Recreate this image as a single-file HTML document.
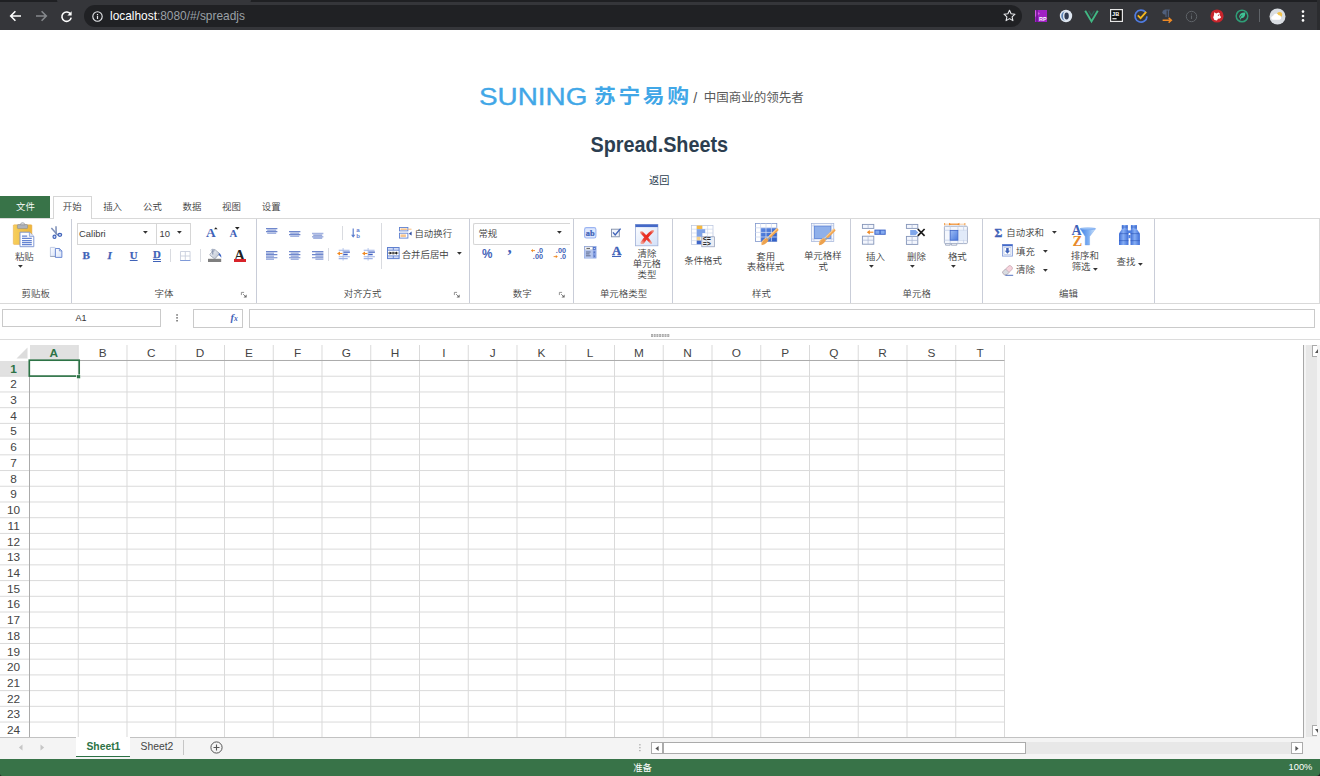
<!DOCTYPE html>
<html lang="zh">
<head>
<meta charset="utf-8">
<title>Spread.Sheets</title>
<style>
html,body{margin:0;padding:0;background:#fff;}
body{width:1320px;height:776px;position:relative;overflow:hidden;font-family:"Liberation Sans","Noto Sans CJK SC",sans-serif;color:#333;}
.a{position:absolute;}
.t{position:absolute;white-space:nowrap;font-size:9.43px;line-height:12px;color:#3c3c3c;font-weight:350;}
.c{text-align:center;}
svg{position:absolute;overflow:visible;}
#chrome{left:0;top:0;width:1320px;height:30px;background:#35363a;}
.gsep{position:absolute;top:219px;width:1px;height:84px;background:#c9cdd8;}
.sep{position:absolute;width:1px;background:#d9dbe0;}
.gl{position:absolute;top:288px;font-size:9.43px;line-height:12px;color:#444;font-weight:350;white-space:nowrap;transform:translateX(-50%);}
.box{position:absolute;border:1px solid #c8c8c8;box-sizing:border-box;background:#fff;}
.dd{position:absolute;width:0;height:0;border-left:2.5px solid transparent;border-right:2.5px solid transparent;border-top:2.9px solid #333;}
.dl{position:absolute;width:5.5px;height:5.5px;}
.rn{position:absolute;left:0;width:27.2px;text-align:center;font-size:11.8px;line-height:15.7px;color:#444;}
.ch{position:absolute;top:345px;height:15.5px;text-align:center;font-size:11.8px;line-height:16px;color:#444;width:48.75px;}
</style>
</head>
<body>
<div id="chrome" class="a">
<div class="a" style="left:0;top:0;width:1320px;height:2px;background:#1f2023"></div>
<div class="a" style="left:57px;top:0;width:194px;height:3px;background:#35363a;border-radius:0 0 3px 3px"></div>
<div class="a" style="left:84px;top:5px;width:938px;height:22px;border-radius:11px;background:#202124"></div>
<svg style="left:9px;top:10px" width="13" height="12" viewBox="0 0 13 12"><path d="M12 6H2M6.4 1.3L1.7 6l4.7 4.7" fill="none" stroke="#fff" stroke-width="1.6"/></svg>
<svg style="left:35px;top:10px" width="13" height="12" viewBox="0 0 13 12"><path d="M1 6h10M6.6 1.3L11.3 6l-4.7 4.7" fill="none" stroke="#85888c" stroke-width="1.6"/></svg>
<svg style="left:60px;top:9.5px" width="13" height="13" viewBox="0 0 13 13"><path d="M10.6 4.2A4.7 4.7 0 1 0 11.2 7.6" fill="none" stroke="#fff" stroke-width="1.6"/><path d="M11.6 1.2v4.2H7.4z" fill="#fff"/></svg>
<svg style="left:92px;top:10.5px" width="11" height="11" viewBox="0 0 11 11"><circle cx="5.5" cy="5.5" r="4.7" fill="none" stroke="#e8eaed" stroke-width="1.1"/><path d="M5.5 4.8v3.2M5.5 2.9v1.1" stroke="#e8eaed" stroke-width="1.2"/></svg>
<div class="a" id="url" style="left:110px;top:9.1px;font-size:11.9px;line-height:15px;color:#9aa0a6;white-space:nowrap"><span style="color:#fff">localhost</span>:8080/#/spreadjs</div>
<svg style="left:1003px;top:9px" width="13" height="13" viewBox="0 0 13 13"><path d="M6.5 1.2l1.6 3.6 3.9.4-2.9 2.6.8 3.8-3.4-2-3.4 2 .8-3.8L1 5.2l3.9-.4z" fill="none" stroke="#e8eaed" stroke-width="1.1" stroke-linejoin="round"/></svg>
<svg style="left:1034px;top:9px" width="14" height="14" viewBox="0 0 14 14"><rect x="1" y="1" width="12" height="12" fill="#a021c4"/><path d="M1 1l5 3.5L1 8z" fill="#d65be8"/><rect x="2.2" y="1" width="1.6" height="12" fill="#6d1391"/><text x="5" y="11.6" font-size="5.4" font-weight="bold" fill="#fff" font-family="Liberation Sans,sans-serif">RP</text></svg>
<svg style="left:1059px;top:9px" width="14" height="14" viewBox="0 0 14 14"><circle cx="7" cy="7" r="6.2" fill="#dfe7f1"/><path d="M7 2.2a4.8 4.8 0 1 0 0 9.6a3 4.8 0 1 1 0-9.6z" fill="#5c84b8"/><ellipse cx="7.6" cy="7" rx="2.2" ry="3.4" fill="#2f3b52"/></svg>
<svg style="left:1084px;top:10px" width="15" height="13" viewBox="0 0 15 13"><path d="M1.200 .8L7.500 11.400 13.800 .8" fill="none" stroke="#41b883" stroke-width="1.900"/><path d="M4.600 .8L7.500 5.600 10.400 .8" fill="none" stroke="#2f5f55" stroke-width="1.200"/></svg>
<svg style="left:1110px;top:9px" width="13" height="13" viewBox="0 0 13 13"><rect x=".6" y=".6" width="11.8" height="11.8" fill="#111" stroke="#e6e6e6" stroke-width="1.2"/><text x="2.1" y="7.2" font-size="5.6" font-weight="bold" fill="#fff" font-family="Liberation Sans,sans-serif">JB</text><rect x="2.4" y="9.2" width="4.2" height="1.1" fill="#fff"/></svg>
<svg style="left:1134px;top:9px" width="14" height="14" viewBox="0 0 14 14"><path d="M11.6 3.2A6 6 0 1 0 13 7.4" fill="none" stroke="#4f7be0" stroke-width="1.7"/><path d="M3.8 6.4l2.8 2.8 5.6-6.4" fill="none" stroke="#f5b71c" stroke-width="1.8"/></svg>
<svg style="left:1160px;top:9px" width="14" height="14" viewBox="0 0 14 14"><path d="M4.6 1h5.2M6 1v7M8.4 1v7" stroke="#4f5f7c" stroke-width="1.2" fill="none"/><path d="M4.6 1a2.2 2.2 0 0 0 0 4.4H6V1z" fill="#4f5f7c"/><path d="M2.6 11.2h8.6M8.6 8.8l2.8 2.4-2.8 2.4" fill="none" stroke="#f08a24" stroke-width="1.4"/></svg>
<svg style="left:1185px;top:10px" width="13" height="13" viewBox="0 0 13 13"><circle cx="6.5" cy="6.5" r="5.2" fill="none" stroke="#5f6368" stroke-width="1"/><path d="M6.5 5.6v3.4M6.5 3.6v1" stroke="#5f6368" stroke-width="1.1"/></svg>
<svg style="left:1210px;top:9px" width="14" height="14" viewBox="0 0 14 14"><circle cx="7" cy="7" r="6.6" fill="#c8252c"/><path d="M4.2 3.2l2 1.2 2.2-1 1.4.8-.3 1.6 1.6 2.4-1.2 1.4-1.9.2-1 1.6-2.6-.4-1.2-2.6.8-2.4z" fill="#fff"/><circle cx="8.4" cy="6.2" r=".6" fill="#c8252c"/></svg>
<svg style="left:1235px;top:9px" width="14" height="14" viewBox="0 0 14 14"><circle cx="7" cy="7" r="5.8" fill="none" stroke="#2f9e77" stroke-width="1.5"/><path d="M10.2 3.6C6.800 3.400 4.400 5 4.200 7.800c0 .8.200 1.600.200 1.600C5 7.600 6 6.400 7.800 5.800 6.200 7 5.200 8.400 4.800 10.400l.9.200.5-1.400C9 9.400 10.600 7 10.200 3.600z" fill="#3fc496"/></svg>
<div class="a" style="left:1259px;top:9px;width:1px;height:13px;background:#5f6368"></div>
<svg style="left:1269px;top:8px" width="17" height="17" viewBox="0 0 17 17"><circle cx="8.500" cy="8.500" r="8" fill="#d9dde2"/><circle cx="10.6" cy="6.6" r="2.6" fill="#f3c34a"/><path d="M3.6 11.800a2 2 0 0 1 .4-3.900 3 3 0 0 1 5.600-.6 2.300 2.300 0 0 1 .9 4.500z" fill="#fff"/></svg>
<svg style="left:1301px;top:10px" width="4" height="12" viewBox="0 0 4 12"><circle cx="2" cy="1.600" r="1.300" fill="#fff"/><circle cx="2" cy="6" r="1.300" fill="#fff"/><circle cx="2" cy="10.400" r="1.300" fill="#fff"/></svg>
<div class="a" style="left:1317px;top:0;width:3px;height:30px;background:#2b2c2f"></div>
</div>
<div class="a" id="suning" style="left:479.2px;top:81.6px;font-size:24.1px;line-height:30px;color:#41a7e7;-webkit-text-stroke:.35px #41a7e7;white-space:nowrap;transform-origin:0 50%;transform:scaleX(1.157)">SUNING</div>
<div class="a" id="snzh" style="left:593.9px;top:80.9px;font-size:19.4px;line-height:30px;letter-spacing:2.3px;font-weight:700;color:#41a7e7;white-space:nowrap;transform-origin:0 50%;transform:scaleX(1.125)">苏宁易购</div>
<div class="a" id="slash" style="left:693.2px;top:88px;font-size:14.2px;line-height:20px;color:#555;white-space:nowrap">/</div>
<div class="a" id="slogan" style="left:703.8px;top:87.8px;font-size:12.5px;line-height:20px;color:#5a5a5a;white-space:nowrap">中国商业的领先者</div>
<div class="a" id="title" style="left:0;top:129.6px;width:1318.6px;text-align:center;font-weight:bold;font-size:21.9px;line-height:30px;color:#2c3e50;white-space:nowrap;transform:scaleX(0.905)">Spread.Sheets</div>
<div class="a" id="back" style="left:0;top:174.3px;width:1318.4px;text-align:center;font-size:10.2px;line-height:14px;color:#2c3e50">返回</div>
<div class="a" style="left:0;top:196px;width:50px;height:22px;background:#387348"></div>
<div class="t " style="left:25.50px;top:200.50px;transform:translateX(-50%);color:#fff;">文件</div>
<div class="a" style="left:-1px;top:218px;width:1321px;height:85.5px;border:1px solid #d9d9d9;box-sizing:border-box;background:#fff"></div>
<div class="a" style="left:53px;top:196px;width:38.5px;height:23px;border:1px solid #d6d6d6;border-bottom:none;box-sizing:border-box;background:#fff"></div>
<div class="t " style="left:72.20px;top:200.70px;transform:translateX(-50%);">开始</div>
<div class="t " style="left:112.60px;top:200.70px;transform:translateX(-50%);">插入</div>
<div class="t " style="left:152.40px;top:200.70px;transform:translateX(-50%);">公式</div>
<div class="t " style="left:191.90px;top:200.70px;transform:translateX(-50%);">数据</div>
<div class="t " style="left:231.40px;top:200.70px;transform:translateX(-50%);">视图</div>
<div class="t " style="left:271.20px;top:200.70px;transform:translateX(-50%);">设置</div>
<div class="gsep" style="left:71.00px"></div>
<div class="gsep" style="left:256.10px"></div>
<div class="gsep" style="left:469.10px"></div>
<div class="gsep" style="left:573.00px"></div>
<div class="gsep" style="left:671.75px"></div>
<div class="gsep" style="left:849.50px"></div>
<div class="gsep" style="left:982.00px"></div>
<div class="gsep" style="left:1153.90px"></div>
<div class="gl" style="left:35.75px">剪贴板</div>
<div class="gl" style="left:164px">字体</div>
<div class="gl" style="left:362.6px">对齐方式</div>
<div class="gl" style="left:522.2px">数字</div>
<div class="gl" style="left:623.5px">单元格类型</div>
<div class="gl" style="left:761.5px">样式</div>
<div class="gl" style="left:916.7px">单元格</div>
<div class="gl" style="left:1068.5px">编辑</div>
<svg style="left:240.6px;top:291.5px" width="5.8" height="5.8" viewBox="0 0 6 6"><path d="M.4 3.200V.4H3.200" fill="none" stroke="#777" stroke-width=".8"/><path d="M5.800 2.600v3.200H2.600z" fill="#666"/><path d="M2.200 2.200l2.400 2.400" stroke="#666" stroke-width=".8"/></svg>
<svg style="left:453.9px;top:291.5px" width="5.8" height="5.8" viewBox="0 0 6 6"><path d="M.4 3.200V.4H3.200" fill="none" stroke="#777" stroke-width=".8"/><path d="M5.800 2.600v3.200H2.600z" fill="#666"/><path d="M2.200 2.200l2.400 2.400" stroke="#666" stroke-width=".8"/></svg>
<svg style="left:559.4px;top:291.5px" width="5.8" height="5.8" viewBox="0 0 6 6"><path d="M.4 3.200V.4H3.200" fill="none" stroke="#777" stroke-width=".8"/><path d="M5.800 2.600v3.200H2.600z" fill="#666"/><path d="M2.200 2.200l2.400 2.400" stroke="#666" stroke-width=".8"/></svg>
<svg style="left:13.20px;top:223.00px" width="21.00" height="24.00" viewBox="0 0 21 24" preserveAspectRatio="none"><defs><linearGradient id="pg" x1="0" y1="0" x2="1" y2="0"><stop offset="0" stop-color="#f7cf5c"/><stop offset="1" stop-color="#eeb53a"/></linearGradient></defs><rect x=".3" y="1.800" width="18.600" height="19.600" rx=".8" fill="url(#pg)" stroke="#e9a94a" stroke-width=".5"/><rect x="4.400" y="1.600" width="10.200" height="4" rx=".8" fill="#aeb2b9" stroke="#7d8189" stroke-width=".5"/><path d="M7.400 1.800a2.200 2.200 0 0 1 4.400 0z" fill="#d5d7db" stroke="#7d8189" stroke-width=".45"/><path d="M7 9.200h9.400l4.400 4.200v10.300H7z" fill="#fdfdff" stroke="#7690cf" stroke-width=".9"/><path d="M16.400 9.200v4.200h4.400" fill="#dfe7f8" stroke="#7690cf" stroke-width=".7"/><path d="M9 13h5.200M9 15.400h9.800M9 17.500h9.800M9 19.600h9.800M9 21.600h9.800" stroke="#6483d2" stroke-width="1.250"/></svg>
<div class="t " style="left:24.30px;top:250.50px;transform:translateX(-50%);">粘贴</div>
<svg style="left:17.60px;top:264.80px" width="4.800" height="2.700" viewBox="0 0 4.800 2.700"><path d="M0 0h4.800L2.400 2.700z" fill="#333"/></svg>
<svg style="left:51.00px;top:226.00px" width="11.20" height="13.00" viewBox="0 0 11.2 13" preserveAspectRatio="none"><path d="M.4 2L6.800 9.200" stroke="#7d8fb8" stroke-width="1.500" fill="none"/><path d="M5 .3L5.200 8.600" stroke="#7d8fb8" stroke-width="1.500" fill="none"/><ellipse cx="3.500" cy="10.800" rx="1.500" ry="1.700" fill="#cfdaf4" stroke="#3f62b8" stroke-width="1.150"/><ellipse cx="8.900" cy="8.800" rx="1.800" ry="1.500" fill="#cfdaf4" stroke="#3f62b8" stroke-width="1.150"/></svg>
<svg style="left:50.20px;top:247.20px" width="12.20" height="10.80" viewBox="0 0 12.2 10.8" preserveAspectRatio="none"><defs><linearGradient id="cg" x1="0" y1="0" x2="1" y2="1"><stop offset="0" stop-color="#fff"/><stop offset="1" stop-color="#d5e0f6"/></linearGradient></defs><path d="M.4 .4h4.200l1.800 1.600v7.400H.4z" fill="url(#cg)" stroke="#a9b8d8" stroke-width=".7"/><path d="M.2 9.500h6" stroke="#8d97aa" stroke-width=".7"/><path d="M5.400 1.500h4l2.500 2.400v6.500H5.400z" fill="url(#cg)" stroke="#5f80cf" stroke-width=".9"/><path d="M9.400 1.500v2.400h2.500" fill="none" stroke="#5f80cf" stroke-width=".7"/></svg>
<div class="box" style="left:76.5px;top:223px;width:80.3px;height:22px;border-color:#d6d6d6"></div>
<div class="box" style="left:155.8px;top:223px;width:35px;height:22px;border-color:#d6d6d6"></div>
<div class="t " style="left:79.00px;top:227.60px;">Calibri</div>
<svg style="left:142.60px;top:231.20px" width="4.800" height="2.700" viewBox="0 0 4.800 2.700"><path d="M0 0h4.800L2.400 2.700z" fill="#333"/></svg>
<div class="t " style="left:159.60px;top:227.60px;">10</div>
<svg style="left:177.40px;top:231.20px" width="4.800" height="2.700" viewBox="0 0 4.800 2.700"><path d="M0 0h4.800L2.400 2.700z" fill="#333"/></svg>
<div class="a" style="left:206px;top:225.4px;font-family:'Liberation Serif',serif;font-weight:bold;font-size:13.4px;line-height:16px;color:#3f62b8">A</div>
<svg style="left:213.500px;top:227.200px" width="3.600" height="2.500" viewBox="0 0 4.600 2.800"><path d="M0 2.800h4.600L2.300 0z" fill="#222"/></svg>
<div class="a" style="left:229.4px;top:227px;font-family:'Liberation Serif',serif;font-weight:bold;font-size:10.8px;line-height:13px;color:#3f62b8">A</div>
<svg style="left:235.300px;top:226.800px" width="4.600" height="2.800" viewBox="0 0 4.600 2.800"><path d="M0 0h4.600L2.300 2.800z" fill="#222"/></svg>
<div class="a" style="left:82.6px;top:248.4px;font-family:'Liberation Serif',serif;font-weight:bold;font-size:11.2px;line-height:14px;color:#3f62b8;-webkit-text-stroke:.25px #3f62b8;">B</div>
<div class="a" style="left:107.6px;top:248.4px;font-family:'Liberation Serif',serif;font-weight:bold;font-size:11.2px;line-height:14px;color:#3f62b8;-webkit-text-stroke:.25px #3f62b8;font-style:italic;">I</div>
<div class="a" style="left:129.8px;top:247.8px;font-family:'Liberation Serif',serif;font-weight:bold;font-size:10.8px;line-height:14px;color:#3f62b8;-webkit-text-stroke:.25px #3f62b8;text-decoration:underline;text-underline-offset:1.200px;text-decoration-thickness:1px;">U</div>
<div class="a" style="left:153px;top:247.8px;font-family:'Liberation Serif',serif;font-weight:bold;font-size:10.8px;line-height:14px;color:#3f62b8;-webkit-text-stroke:.25px #3f62b8;text-decoration:underline;text-underline-offset:.9px;text-decoration-thickness:.9px;border-bottom:1px solid #3f62b8;line-height:13.3px;">D</div>
<div class="sep" style="left:170px;top:248.5px;height:13px"></div>
<svg style="left:180.00px;top:251.00px" width="10.60" height="10.00" viewBox="0 0 10.6 10" preserveAspectRatio="none"><path d="M.5 .5h9.600v9H.5zM5.300 .5v9M.5 5h9.600" fill="none" stroke="#c9cfdd" stroke-width=".9"/><path d="M.2 9.500h10.200" stroke="#7e9ad8" stroke-width="1"/></svg>
<div class="sep" style="left:200px;top:248.5px;height:13px"></div>
<svg style="left:208.10px;top:249.00px" width="13.20" height="13.00" viewBox="0 0 13.2 13" preserveAspectRatio="none"><defs><linearGradient id="bk" x1="0" y1="0" x2="1" y2="1"><stop offset="0" stop-color="#f4f6fa"/><stop offset="1" stop-color="#b9c0cd"/></linearGradient></defs><path d="M9.400 3.200c2.600.6 4.200 2.400 3.900 5.600-.9-1.600-2.200-2.500-3.700-2.700z" fill="#3a62c4"/><path d="M2 5.200L5.800 .8c.3-.4.900-.4 1.300-.1l3.700 3.200c.4.300.4.900.1 1.300L7.400 9.400c-.3.400-.9.500-1.300.1L2.200 6.400c-.4-.3-.5-.8-.2-1.200z" fill="url(#bk)" stroke="#8e96a6" stroke-width=".7"/><path d="M4.800 .3v5.200" stroke="#6f7f9f" stroke-width=".9"/><ellipse cx="4.800" cy="1.500" rx="1.700" ry="1.300" fill="none" stroke="#8e9ab4" stroke-width=".6"/><rect x="0" y="9.800" width="13.200" height="3.200" fill="#7f7f7f"/></svg>
<div class="a" style="left:234.3px;top:246.800px;font-family:'Liberation Serif',serif;font-weight:bold;font-size:14.6px;line-height:16px;color:#222">A</div>
<div class="a" style="left:233.8px;top:258.800px;width:12.5px;height:3.100px;background:#d8232a"></div>
<svg style="left:265.6px;top:227.5px" width="11.4" height="6.80" viewBox="0 0 11.4 6.80"><path d="M1.2 2.15H10.2M1.2 5.25H10.2" stroke="#a3b3e0" stroke-width="1.500" fill="none"/><path d="M0 0.60H11.4M0 3.70H11.4" stroke="#6f87cc" stroke-width="1.150" fill="none"/></svg>
<svg style="left:288.5px;top:230.7px" width="11.4" height="6.80" viewBox="0 0 11.4 6.80"><path d="M1.2 2.15H10.2M1.2 5.25H10.2" stroke="#a3b3e0" stroke-width="1.500" fill="none"/><path d="M0 0.60H11.4M0 3.70H11.4" stroke="#6f87cc" stroke-width="1.150" fill="none"/></svg>
<svg style="left:311.9px;top:232.9px" width="11.4" height="6.80" viewBox="0 0 11.4 6.80"><path d="M0 0.60H11.4M0 3.70H11.4M1.2 5.25H10.2" stroke="#a3b3e0" stroke-width="1.500" fill="none"/><path d="M1.2 2.15H10.2" stroke="#6f87cc" stroke-width="1.150" fill="none"/></svg>
<svg style="left:265.6px;top:250.5px" width="11.4" height="9.90" viewBox="0 0 11.4 9.90"><path d="M0 2.15H8M0 5.25H8M0 8.35H8" stroke="#a3b3e0" stroke-width="1.500" fill="none"/><path d="M0 0.60H11.4M0 3.70H11.4M0 6.80H11.4" stroke="#6f87cc" stroke-width="1.150" fill="none"/></svg>
<svg style="left:288.5px;top:250.5px" width="11.4" height="9.90" viewBox="0 0 11.4 9.90"><path d="M1.7 2.15H9.7M1.7 5.25H9.7M1.7 8.35H9.7" stroke="#a3b3e0" stroke-width="1.500" fill="none"/><path d="M0 0.60H11.4M0 3.70H11.4M0 6.80H11.4" stroke="#6f87cc" stroke-width="1.150" fill="none"/></svg>
<svg style="left:311.9px;top:250.5px" width="11.4" height="9.90" viewBox="0 0 11.4 9.90"><path d="M3.4 2.15H11.4M3.4 5.25H11.4M3.4 8.35H11.4" stroke="#a3b3e0" stroke-width="1.500" fill="none"/><path d="M0 0.60H11.4M0 3.70H11.4M0 6.80H11.4" stroke="#6f87cc" stroke-width="1.150" fill="none"/></svg>
<div class="sep" style="left:342px;top:226.300px;height:13.500px"></div>
<div class="sep" style="left:328px;top:247.800px;height:13px"></div>
<svg style="left:350.60px;top:228.30px" width="9.60" height="10.20" viewBox="0 0 9.6 10.2" preserveAspectRatio="none"><path d="M2.200 .4v8.400" fill="none" stroke="#5f80cf" stroke-width="1.200"/><path d="M.1 6.800h4.200L2.200 9.800z" fill="#5f80cf"/><text x="5.300" y="4.200" font-size="6.200" font-weight="bold" fill="#5f80cf" font-family="Liberation Sans,sans-serif">a</text><text x="5.300" y="9.900" font-size="6.200" font-weight="bold" fill="#5f80cf" font-family="Liberation Sans,sans-serif">b</text></svg>
<svg style="left:337.20px;top:247.90px" width="12.90" height="12.60" viewBox="0 0 12.9 12.6" preserveAspectRatio="none"><path d="M6.100 0v12.600" stroke="#9db2e2" stroke-width=".7"/><path d="M1.700 2.200h10.900M1.700 8.700h11.200M1.700 10.600h9" stroke="#9fb2e6" stroke-width="1.100"/><path d="M6.500 4.200h6.400M6.300 6.500h4.400" stroke="#3f5fc0" stroke-width="1.300"/><path d="M2 5.500h3.400" stroke="#f08a24" stroke-width="1.100"/><path d="M3 3.500L0 5.500l3 2z" fill="#f08a24"/></svg>
<svg style="left:362.30px;top:247.90px" width="12.90" height="12.60" viewBox="0 0 12.9 12.6" preserveAspectRatio="none"><path d="M6.100 0v12.600" stroke="#9db2e2" stroke-width=".7"/><path d="M1.700 2.200h10.900M1.700 8.700h11.200M1.700 10.600h9" stroke="#9fb2e6" stroke-width="1.100"/><path d="M6.500 4.200h6.400M6.300 6.500h4.400" stroke="#3f5fc0" stroke-width="1.300"/><path d="M2 5.500h3.400" stroke="#f08a24" stroke-width="1.100"/><path d="M3 3.500L0 5.500l3 2z" fill="#f08a24"/></svg>
<div class="sep" style="left:381px;top:222.800px;height:46.600px"></div>
<svg style="left:398.80px;top:227.10px" width="13.00" height="11.60" viewBox="0 0 13 11.6" preserveAspectRatio="none"><rect x=".5" y=".5" width="8.400" height="3.400" fill="#fff" stroke="#5f80cf" stroke-width=".9"/><rect x=".5" y="6.200" width="8.400" height="4.900" fill="#fff" stroke="#5f80cf" stroke-width=".9"/><rect x="1.500" y="1.400" width="6.400" height="1.600" fill="#f7c58e"/><rect x="1.500" y="7.400" width="5.400" height="2.600" fill="#f7c58e"/><path d="M8.900 2.200h3.600" stroke="#f5b26c" stroke-width=".9"/><path d="M12.600 4.400L9.800 6.800l2.800 1.600z" fill="#2f4ea0"/></svg>
<div class="t " style="left:414.40px;top:228.10px;">自动换行</div>
<svg style="left:387.10px;top:247.40px" width="12.60" height="12.10" viewBox="0 0 12.6 12.1" preserveAspectRatio="none"><rect x=".5" y=".5" width="11.600" height="11.100" fill="#cfdaf6" stroke="#5f80cf" stroke-width="1"/><path d="M.5 3.300h11.600M.5 8.800h11.600M6.300 .5v2.800M6.300 8.800v2.800" stroke="#5f80cf" stroke-width=".9"/><rect x="1" y="3.800" width="10.600" height="4.500" fill="#fff"/><path d="M1.200 6.050h10.200" stroke="#222" stroke-width=".8"/><path d="M2.600 4.400l2.200 1.650-2.200 1.650zM10 4.400L7.800 6.050 10 7.700z" fill="#222"/><rect x="5.300" y="4.800" width="2" height="2.500" fill="#555"/></svg>
<div class="t " style="left:401.70px;top:248.60px;">合并后居中</div>
<svg style="left:456.60px;top:252.00px" width="4.800" height="2.700" viewBox="0 0 4.800 2.700"><path d="M0 0h4.800L2.400 2.700z" fill="#333"/></svg>
<div class="box" style="left:473.4px;top:223px;width:97px;height:22px;border-color:#d6d6d6;border-right:none;border-radius:2px 0 0 2px"></div>
<div class="t " style="left:478.40px;top:227.60px;">常规</div>
<svg style="left:557.40px;top:231.20px" width="4.800" height="2.700" viewBox="0 0 4.800 2.700"><path d="M0 0h4.800L2.400 2.700z" fill="#333"/></svg>
<div class="a" style="left:481.9px;top:246.800px;font-weight:bold;font-size:12.2px;line-height:14px;color:#3f62b8;transform:scaleX(.96);transform-origin:0 0">%</div>
<div class="a" style="left:507.6px;top:239.200px;font-family:'Liberation Serif',serif;font-weight:bold;font-size:17px;line-height:18px;color:#3f62b8">,</div>
<svg style="left:531.20px;top:247.50px" width="12.00" height="11.30" viewBox="0 0 12 11.3" preserveAspectRatio="none"><text x="12" y="5.300" font-size="7.300" font-weight="bold" fill="#3f62b8" font-family="Liberation Sans,sans-serif" text-anchor="end">.0</text><text x="12" y="11.200" font-size="7.300" font-weight="bold" fill="#3f62b8" font-family="Liberation Sans,sans-serif" text-anchor="end">.00</text><path d="M.6 2.6h3.400" stroke="#f08a24" stroke-width=".9"/><path d="M2 0.9000000000000001L0 2.6l2 1.700z" fill="#f08a24"/></svg>
<svg style="left:554.00px;top:247.50px" width="12.00" height="11.30" viewBox="0 0 12 11.3" preserveAspectRatio="none"><text x="12" y="5.300" font-size="7.300" font-weight="bold" fill="#3f62b8" font-family="Liberation Sans,sans-serif" text-anchor="end">.00</text><text x="12" y="11.200" font-size="7.300" font-weight="bold" fill="#3f62b8" font-family="Liberation Sans,sans-serif" text-anchor="end">.0</text><path d="M-.4 8.6h3" stroke="#f08a24" stroke-width=".9"/><path d="M1.800 6.8999999999999995l2 1.700-2 1.700z" fill="#f08a24"/></svg>
<svg style="left:583.80px;top:226.90px" width="12.50" height="11.60" viewBox="0 0 12.5 11.6" preserveAspectRatio="none"><rect x=".6" y=".6" width="11.300" height="10.400" rx="1.800" fill="#dde7fd" stroke="#9bb4f2" stroke-width="1.100"/><text x="6.250" y="8.900" text-anchor="middle" font-size="8.400" font-weight="bold" fill="#3f62b8" stroke="#3f62b8" stroke-width=".25" font-family="Liberation Serif,serif">ab</text></svg>
<svg style="left:583.80px;top:246.30px" width="12.50" height="12.50" viewBox="0 0 12.5 12.5" preserveAspectRatio="none"><rect x=".4" y=".4" width="11.700" height="11.700" fill="#c3d1f3" stroke="#8aa4e2" stroke-width=".7"/><rect x=".9" y=".9" width="8" height="3" fill="#fff" stroke="#8b93a8" stroke-width=".4"/><rect x="8.900" y=".9" width="2.900" height="3" fill="#4f72cc"/><path d="M2.400 2.400h3.600" stroke="#333" stroke-width=".8"/><path d="M9.500 2l.85 1 .85-1z" fill="#fff"/><rect x=".9" y="4.400" width="8" height="7.400" fill="#b4c5ee"/><path d="M2 6h4.600M2 7.900h3.600M2 9.800h4.600" stroke="#4a5674" stroke-width=".8"/><rect x="8.900" y="4.400" width="2.900" height="7.400" fill="#7f9be0"/><path d="M9.500 6.600l.85-1 .85 1zM9.500 9.800l.85 1 .85-1z" fill="#2f4a9a"/></svg>
<svg style="left:611.00px;top:227.50px" width="10.00" height="9.40" viewBox="0 0 10 9.4" preserveAspectRatio="none"><rect x=".5" y="1.200" width="7.800" height="7.600" fill="#f2f5fc" stroke="#7f8da8" stroke-width=".9"/><path d="M2 4.400l2.200 2.600L9.600 .6" fill="none" stroke="#3f62b8" stroke-width="1.400"/></svg>
<div class="a" style="left:611.9px;top:244px;font-family:'Liberation Serif',serif;font-weight:bold;font-size:13px;line-height:14px;color:#3f62b8;-webkit-text-stroke:.35px #3f62b8">A</div>
<div class="a" style="left:612.1px;top:256px;width:9px;height:1px;background:#3f62b8"></div>
<svg style="left:634.80px;top:223.80px" width="23.30" height="22.20" viewBox="0 0 23.3 22.2" preserveAspectRatio="none"><defs><linearGradient id="xb" x1="0" y1="0" x2="1" y2="1"><stop offset="0" stop-color="#fdfeff"/><stop offset="1" stop-color="#d3e0f8"/></linearGradient><radialGradient id="xr" cx=".5" cy=".45" r=".6"><stop offset="0" stop-color="#e8261c"/><stop offset=".6" stop-color="#ea3f33"/><stop offset="1" stop-color="#f3a093"/></radialGradient></defs><rect x=".4" y=".4" width="22.500" height="21.400" fill="url(#xb)" stroke="#9fb0d6" stroke-width=".8"/><rect x=".4" y=".4" width="22.500" height="2.700" fill="#4469c8"/><path d="M5.200 7.800c1.200-.8 2.400-.4 3.400.6 3 3 5.800 6.200 8.400 10 .6 1-.8 2-1.800 1.200-3.400-3.400-6.400-7-9.600-10.200-.6-.6-.8-1.200-.4-1.600z" fill="url(#xr)"/><path d="M18.600 6.200c.8.400.6 1.200-.2 2-3.600 3.400-6.800 7.200-9.400 11.200-.6.900-2.600 1-3.400 0-.4-.6 0-1.400.6-2.200 2.800-4 6.200-7.600 10.200-10.600.8-.6 1.600-.8 2.200-.4z" fill="url(#xr)"/></svg>
<div class="t " style="left:646.90px;top:247.70px;transform:translateX(-50%);">清除</div>
<div class="t " style="left:646.90px;top:258.30px;transform:translateX(-50%);">单元格</div>
<div class="t " style="left:646.90px;top:269.30px;transform:translateX(-50%);">类型</div>
<svg style="left:690.60px;top:224.80px" width="23.80" height="22.10" viewBox="0 0 23.8 22.1" preserveAspectRatio="none"><rect x=".4" y=".4" width="21.600" height="19" fill="#fff" stroke="#b7c3de" stroke-width=".7"/><path d="M5.800 .4v19M11.200 .4v19M16.600 .4v19M.4 4.200h21.600M.4 8h21.600M.4 11.800h21.600M.4 15.600h21.600" stroke="#c9d3ea" stroke-width=".6"/><rect x="5.800" y=".6" width="5.400" height="3.600" fill="#f5b942"/><rect x="5.800" y="4.200" width="8.400" height="3.800" fill="#7fa2e6"/><rect x="5.800" y="8" width="5.400" height="3.800" fill="#7fa2e6"/><rect x="5.800" y="11.800" width="3.600" height="3.800" fill="#f5d28a"/><rect x="5.800" y="15.600" width="4.600" height="3.600" fill="#3f66c8"/><rect x="10.800" y="11.800" width="12.600" height="10" fill="#e9edf5" stroke="#8c98b4" stroke-width=".7"/><text x="11.700" y="16.300" font-size="7" font-weight="bold" fill="#222" font-family="Liberation Sans,sans-serif">&lt;=</text><text x="11.700" y="21.300" font-size="7" font-weight="bold" fill="#222" font-family="Liberation Sans,sans-serif">=&gt;</text></svg>
<div class="t " style="left:703.10px;top:254.80px;transform:translateX(-50%);">条件格式</div>
<svg style="left:755.00px;top:223.10px" width="23.10" height="21.90" viewBox="0 0 23.1 21.9" preserveAspectRatio="none"><defs><linearGradient id="tg" x1="0" y1="0" x2="1" y2="1"><stop offset="0" stop-color="#5f8ae2"/><stop offset="1" stop-color="#2c5cc6"/></linearGradient></defs><rect x=".4" y=".4" width="21.400" height="18" fill="#fff" stroke="#7f96cc" stroke-width=".8"/><rect x="5.600" y="4.800" width="16.200" height="13.600" fill="url(#tg)"/><path d="M5.600 .4v18M11 .4v18M16.400 .4v18M.4 4.800h21.400M.4 9.400h21.400M.4 14h21.400" stroke="#cfd9f0" stroke-width=".8"/><g transform="translate(23,5.9) rotate(46)"><rect x="-1.350" y="0" width="2.700" height="11.96" rx="1" fill="#f2a44c"/><rect x="-1.350" y="0" width="1.100" height="11.96" rx=".5" fill="#f9cd92"/><rect x="-1.500" y="11.96" width="3" height="2.53" fill="#9aa0aa"/><rect x="-1.500" y="11.96" width="1.200" height="2.53" fill="#cfd3da"/><path d="M-1.500 14.49C-3.200 17.47 -2.600 21.30 .4 23.00C2.400 20.45 2.600 17.04 1.500 14.49z" fill="#eda24e"/><path d="M-1.500 14.49C-2.600 17.47 -2 20.45 -.6 22.00" fill="none" stroke="#f6c88c" stroke-width=".8"/></g></svg>
<div class="t " style="left:765.70px;top:250.50px;transform:translateX(-50%);">套用</div>
<div class="t " style="left:765.70px;top:260.50px;transform:translateX(-50%);">表格样式</div>
<svg style="left:811.00px;top:223.10px" width="24.60" height="21.90" viewBox="0 0 24.6 21.9" preserveAspectRatio="none"><rect x=".4" y=".4" width="22.400" height="18" fill="#f4f7fd" stroke="#9fb0d8" stroke-width=".7"/><path d="M3 .4v18M20.200 .4v18M.4 2.800h22.400M.4 16h22.400" stroke="#b5c3e4" stroke-width=".6"/><rect x="3.400" y="3.200" width="16.400" height="12.400" fill="#8fb0ea" stroke="#5f86d8" stroke-width=".8"/><g transform="translate(24,6.4) rotate(46)"><rect x="-1.350" y="0" width="2.700" height="11.65" rx="1" fill="#f2a44c"/><rect x="-1.350" y="0" width="1.100" height="11.65" rx=".5" fill="#f9cd92"/><rect x="-1.500" y="11.65" width="3" height="2.46" fill="#9aa0aa"/><rect x="-1.500" y="11.65" width="1.200" height="2.46" fill="#cfd3da"/><path d="M-1.500 14.11C-3.200 17.01 -2.600 20.74 .4 22.40C2.400 19.91 2.600 16.60 1.500 14.11z" fill="#eda24e"/><path d="M-1.500 14.11C-2.600 17.01 -2 19.91 -.6 21.40" fill="none" stroke="#f6c88c" stroke-width=".8"/></g></svg>
<div class="t " style="left:822.80px;top:249.80px;transform:translateX(-50%);">单元格样</div>
<div class="t " style="left:823.10px;top:261.10px;transform:translateX(-50%);">式</div>
<svg style="left:861.90px;top:224.00px" width="24.10" height="20.80" viewBox="0 0 24.1 20.8" preserveAspectRatio="none"><rect x="0.4" y="0.4" width="11.4" height="4" fill="#f3f6fd" stroke="#8495b8" stroke-width=".9"/><path d="M6.1000000000000005 0.4v4" stroke="#a9b6d2" stroke-width=".7"/><rect x="12.400" y="5.600" width="11.300" height="5.200" fill="#3f66c8"/><rect x="13.400" y="6.600" width="4" height="3.200" fill="#86acf0"/><rect x="18.700" y="6.600" width="4" height="3.200" fill="#86acf0"/><path d="M6.400 8.200h5" stroke="#f08a24" stroke-width="1.100"/><path d="M7.800 6l-3 2.200 3 2.200z" fill="#f08a24"/><rect x="0.4" y="12.2" width="11.4" height="8" fill="#f3f6fd" stroke="#8495b8" stroke-width=".9"/><path d="M6.1000000000000005 12.2v8" stroke="#a9b6d2" stroke-width=".7"/><path d="M.4 16.200h11.400" stroke="#a9b6d2" stroke-width=".7"/></svg>
<div class="t " style="left:875.40px;top:250.80px;transform:translateX(-50%);">插入</div>
<svg style="left:868.90px;top:264.80px" width="4.800" height="2.700" viewBox="0 0 4.800 2.700"><path d="M0 0h4.800L2.400 2.700z" fill="#333"/></svg>
<svg style="left:905.60px;top:223.80px" width="20.00" height="21.00" viewBox="0 0 20 21" preserveAspectRatio="none"><rect x="0.4" y="0.4" width="11.4" height="4" fill="#f3f6fd" stroke="#8495b8" stroke-width=".9"/><path d="M6.1000000000000005 0.4v4" stroke="#a9b6d2" stroke-width=".7"/><path d="M4.200 6h5.400l2.600 2.600-2.600 2.600H4.200z" fill="#7fa6ea"/><path d="M11.800 5l6.800 6.800M18.600 5l-6.800 6.800" stroke="#1a1a1a" stroke-width="1.700"/><rect x="0.4" y="12.4" width="11.4" height="8" fill="#f3f6fd" stroke="#8495b8" stroke-width=".9"/><path d="M6.1000000000000005 12.4v8" stroke="#a9b6d2" stroke-width=".7"/><path d="M.4 16.400h11.400" stroke="#a9b6d2" stroke-width=".7"/></svg>
<div class="t " style="left:916.40px;top:250.80px;transform:translateX(-50%);">删除</div>
<svg style="left:909.90px;top:264.80px" width="4.800" height="2.700" viewBox="0 0 4.800 2.700"><path d="M0 0h4.800L2.400 2.700z" fill="#333"/></svg>
<svg style="left:944.00px;top:222.80px" width="23.80" height="22.80" viewBox="0 0 23.8 22.8" preserveAspectRatio="none"><defs><linearGradient id="fm" x1="0" y1="0" x2="1" y2="1"><stop offset="0" stop-color="#9dbcf4"/><stop offset="1" stop-color="#4a7ade"/></linearGradient></defs><path d="M.6 1.200h20.400" stroke="#f3b478" stroke-width=".7"/><path d="M6.200 1.200h8" stroke="#f08a24" stroke-width="1"/><path d="M.6 0v2.400M20.900 0v2.400" stroke="#f08a24" stroke-width=".8"/><path d="M5 -.2l2.200 1.400L5 2.600zM15.400 -.2l-2.200 1.400 2.200 1.400z" fill="#f08a24"/><rect x=".4" y="3.200" width="23" height="17.400" rx="1" fill="#f4f7fd" stroke="#8e9cb8" stroke-width=".8"/><path d="M6.200 3.200v17.400M13.900 3.200v17.400M19.600 3.200v17.400M.4 7.300h23M.4 17.200h23" stroke="#c3cfe8" stroke-width=".8"/><rect x="14.300" y="7.700" width="8.700" height="9.100" fill="#e1eaf9"/><rect x="6.200" y="7.400" width="7.700" height="9.800" fill="url(#fm)" stroke="#3f66c8" stroke-width=".8"/><path d="M1.600 20.600v1.600h4.600v-1.600M7.400 20.600v1.600h5.400v-1.600" fill="none" stroke="#8e9cb8" stroke-width=".8"/></svg>
<div class="t " style="left:957.30px;top:250.80px;transform:translateX(-50%);">格式</div>
<svg style="left:950.70px;top:264.80px" width="4.800" height="2.700" viewBox="0 0 4.800 2.700"><path d="M0 0h4.800L2.400 2.700z" fill="#333"/></svg>
<div class="a" style="left:994.5px;top:226.100px;font-family:'Liberation Serif',serif;font-weight:bold;font-size:11.9px;line-height:14px;color:#3f62b8;-webkit-text-stroke:.3px #3f62b8">Σ</div>
<div class="t " style="left:1006.30px;top:226.70px;">自动求和</div>
<svg style="left:1052.20px;top:230.80px" width="4.800" height="2.700" viewBox="0 0 4.800 2.700"><path d="M0 0h4.800L2.400 2.700z" fill="#333"/></svg>
<svg style="left:1001.90px;top:244.40px" width="10.90" height="12.50" viewBox="0 0 10.9 12.5" preserveAspectRatio="none"><rect x=".4" y=".4" width="10.100" height="11.700" fill="#f1f5fd" stroke="#7f98d8" stroke-width=".8"/><rect x=".4" y=".4" width="10.100" height="1.800" fill="#4469c8"/><rect x="2" y="3.400" width="6.900" height="7" fill="#fff" stroke="#9fb0d8" stroke-width=".5"/><path d="M4.200 4v2.800H2.800l2.650 3 2.650-3H6.700V4z" fill="#3f62b8"/></svg>
<div class="t " style="left:1016.10px;top:245.90px;">填充</div>
<svg style="left:1042.60px;top:250.20px" width="4.800" height="2.700" viewBox="0 0 4.800 2.700"><path d="M0 0h4.800L2.400 2.700z" fill="#333"/></svg>
<svg style="left:1001.90px;top:264.80px" width="11.30" height="10.80" viewBox="0 0 11.3 10.8" preserveAspectRatio="none"><path d="M1 6.600L6.400 1.200c.8-.8 2-.8 2.800 0l.6.600c.8.800.8 2 0 2.800L4.600 9.800H2.600L1 8.400c-.5-.5-.5-1.300 0-1.800z" fill="#f6d3dc" stroke="#b58a98" stroke-width=".6"/><path d="M1 6.600l2.600-2.600 3.400 3.400-2.400 2.400H2.600L1 8.400c-.5-.5-.5-1.300 0-1.800z" fill="#d9dbe0" stroke="#9a9ca4" stroke-width=".5"/><path d="M3.400 10.300h7.800" stroke="#3f62b8" stroke-width=".9"/></svg>
<div class="t " style="left:1016.10px;top:264.30px;">清除</div>
<svg style="left:1042.60px;top:268.60px" width="4.800" height="2.700" viewBox="0 0 4.800 2.700"><path d="M0 0h4.800L2.400 2.700z" fill="#333"/></svg>
<svg style="left:1072.30px;top:224.80px" width="23.70" height="20.80" viewBox="0 0 23.7 20.8" preserveAspectRatio="none"><text x="-.4" y="9.600" font-size="14" font-weight="bold" fill="#3f62b8" font-family="Liberation Serif,serif">A</text><text x=".6" y="20.700" font-size="14.600" font-weight="bold" fill="#e88a2a" font-family="Liberation Serif,serif">Z</text><defs><linearGradient id="fg" x1="0" y1="0" x2="1" y2="0"><stop offset="0" stop-color="#3f7fe6"/><stop offset=".55" stop-color="#7fb0f2"/><stop offset="1" stop-color="#d3e7fc"/></linearGradient></defs><path d="M8.200 3.800h15.300L17.600 11.600v8.400h-4.400v-8.400z" fill="url(#fg)" stroke="#6f9ee8" stroke-width=".4"/><ellipse cx="15.850" cy="3.700" rx="7.650" ry="1" fill="#9cc4f6" stroke="#5f96ea" stroke-width=".4"/></svg>
<div class="t " style="left:1084.80px;top:249.80px;transform:translateX(-50%);">排序和</div>
<div class="t " style="left:1081.10px;top:260.90px;transform:translateX(-50%);">筛选</div>
<svg style="left:1093.20px;top:268.00px" width="4.800" height="2.700" viewBox="0 0 4.800 2.700"><path d="M0 0h4.800L2.400 2.700z" fill="#333"/></svg>
<svg style="left:1118.50px;top:224.80px" width="20.90" height="20.00" viewBox="0 0 20.9 20" preserveAspectRatio="none"><defs><linearGradient id="bg" x1="0" y1="0" x2="1" y2="0"><stop offset="0" stop-color="#3f6fd8"/><stop offset=".45" stop-color="#86aef4"/><stop offset="1" stop-color="#3f6fd8"/></linearGradient></defs><rect x="2.800" y="0" width="6" height="4.600" fill="url(#bg)"/><rect x="11.900" y="0" width="6" height="4.600" fill="url(#bg)"/><path d="M2.800 4.200h6l.7 4V20H0V8.600z" fill="url(#bg)"/><path d="M11.900 4.200h6l3 4.400V20H11.500V8.200z" fill="url(#bg)"/><rect x="8.600" y="5.400" width="3.600" height="2.600" fill="#4d7fe0"/><rect x="9.400" y="10" width="2.200" height="3.200" fill="#4d7fe0"/><path d="M0 15.600h9.500M11.500 15.600h9.400M2.800 2h6M11.900 2h6M1 8.600h8.500M11.500 8.600h8.500" stroke="#2f58b8" stroke-width=".7" opacity=".8"/></svg>
<div class="t " style="left:1126.00px;top:255.70px;transform:translateX(-50%);">查找</div>
<svg style="left:1138.00px;top:262.60px" width="4.800" height="2.700" viewBox="0 0 4.800 2.700"><path d="M0 0h4.800L2.400 2.700z" fill="#333"/></svg>
<div class="box" style="left:1.5px;top:309px;width:159px;height:17.600px;border-color:#cacaca"></div>
<div class="t " style="left:80.90px;top:312.20px;transform:translateX(-50%);font-size:9px;color:#333;">A1</div>
<svg style="left:175.8px;top:314px" width="2.200" height="8" viewBox="0 0 2.200 8"><rect x=".3" y=".2" width="1.500" height="1.500" fill="#666"/><rect x=".3" y="3.100" width="1.500" height="1.500" fill="#666"/><rect x=".3" y="6" width="1.500" height="1.500" fill="#666"/></svg>
<div class="box" style="left:193px;top:309px;width:50px;height:18.500px;border-color:#cacaca"></div>
<div class="a" style="left:230.6px;top:311.300px;font-family:'Liberation Serif',serif;font-style:italic;font-weight:bold;font-size:10.4px;line-height:14px;color:#3f62b8">f<span style="font-size:7.600px">x</span></div>
<div class="box" style="left:249.3px;top:309px;width:1065.7px;height:18.500px;border-color:#cacaca"></div>
<div class="a" style="left:0;top:339px;width:1320px;height:1px;background:#dcdcdc"></div>
<svg style="left:650.5px;top:333.500px" width="19" height="3" viewBox="0 0 19 3"><path d="M0 1.500h19" stroke="#8e8e8e" stroke-width="2.600" stroke-dasharray="2 .7"/><path d="M0 1.500h19" stroke="#e9e9e9" stroke-width=".5"/></svg>
<div class="a" style="left:0;top:345px;width:1320px;height:414px;background:#f4f4f4"></div>
<div class="a" style="left:0;top:345px;width:1303.500px;height:392.30px;background:#fff"></div>
<div class="a" style="left:29.5px;top:345px;width:48.75px;height:15.500px;background:#e1e1e1"></div>
<div class="a" style="left:0;top:360.5px;width:29.5px;height:15.72px;background:#e1e1e1"></div>
<svg style="left:0;top:345px" width="1304" height="392.30" viewBox="0 345 1304 392.30"><path d="M0 376.22H1004.50M0 391.94H1004.50M0 407.66H1004.50M0 423.38H1004.50M0 439.10H1004.50M0 454.82H1004.50M0 470.54H1004.50M0 486.26H1004.50M0 501.98H1004.50M0 517.70H1004.50M0 533.42H1004.50M0 549.14H1004.50M0 564.86H1004.50M0 580.58H1004.50M0 596.30H1004.50M0 612.02H1004.50M0 627.74H1004.50M0 643.46H1004.50M0 659.18H1004.50M0 674.90H1004.50M0 690.62H1004.50M0 706.34H1004.50M0 722.06H1004.50M78.25 345V737.3M127.00 345V737.3M175.75 345V737.3M224.50 345V737.3M273.25 345V737.3M322.00 345V737.3M370.75 345V737.3M419.50 345V737.3M468.25 345V737.3M517.00 345V737.3M565.75 345V737.3M614.50 345V737.3M663.25 345V737.3M712.00 345V737.3M760.75 345V737.3M809.50 345V737.3M858.25 345V737.3M907.00 345V737.3M955.75 345V737.3M1004.50 345V737.3" stroke="#dadada" stroke-width="1" fill="none"/><path d="M29.5 360.5H1004.50M29.5 360.5V737.3" stroke="#ababab" stroke-width="1" fill="none"/><path d="M27.500 347.500V358.500H16.500z" fill="#dcdcdc"/></svg>
<div class="ch" style="left:29.50px;font-weight:bold;color:#2d7346;">A</div>
<div class="ch" style="left:78.25px;">B</div>
<div class="ch" style="left:127.00px;">C</div>
<div class="ch" style="left:175.75px;">D</div>
<div class="ch" style="left:224.50px;">E</div>
<div class="ch" style="left:273.25px;">F</div>
<div class="ch" style="left:322.00px;">G</div>
<div class="ch" style="left:370.75px;">H</div>
<div class="ch" style="left:419.50px;">I</div>
<div class="ch" style="left:468.25px;">J</div>
<div class="ch" style="left:517.00px;">K</div>
<div class="ch" style="left:565.75px;">L</div>
<div class="ch" style="left:614.50px;">M</div>
<div class="ch" style="left:663.25px;">N</div>
<div class="ch" style="left:712.00px;">O</div>
<div class="ch" style="left:760.75px;">P</div>
<div class="ch" style="left:809.50px;">Q</div>
<div class="ch" style="left:858.25px;">R</div>
<div class="ch" style="left:907.00px;">S</div>
<div class="ch" style="left:955.75px;">T</div>
<div class="rn" style="top:361.60px;font-weight:bold;color:#2d7346;">1</div>
<div class="rn" style="top:377.32px;">2</div>
<div class="rn" style="top:393.04px;">3</div>
<div class="rn" style="top:408.76px;">4</div>
<div class="rn" style="top:424.48px;">5</div>
<div class="rn" style="top:440.20px;">6</div>
<div class="rn" style="top:455.92px;">7</div>
<div class="rn" style="top:471.64px;">8</div>
<div class="rn" style="top:487.36px;">9</div>
<div class="rn" style="top:503.08px;">10</div>
<div class="rn" style="top:518.80px;">11</div>
<div class="rn" style="top:534.52px;">12</div>
<div class="rn" style="top:550.24px;">13</div>
<div class="rn" style="top:565.96px;">14</div>
<div class="rn" style="top:581.68px;">15</div>
<div class="rn" style="top:597.40px;">16</div>
<div class="rn" style="top:613.12px;">17</div>
<div class="rn" style="top:628.84px;">18</div>
<div class="rn" style="top:644.56px;">19</div>
<div class="rn" style="top:660.28px;">20</div>
<div class="rn" style="top:676.00px;">21</div>
<div class="rn" style="top:691.72px;">22</div>
<div class="rn" style="top:707.44px;">23</div>
<div class="rn" style="top:723.16px;">24</div>
<svg style="left:0;top:0" width="100" height="400" viewBox="0 0 100 400"><rect x="29.300" y="360.200" width="49.900" height="15.900" fill="none" stroke="#2d7346" stroke-width="1.650"/><rect x="76.200" y="374.500" width="4.400" height="4.200" fill="#fff"/><rect x="76.900" y="375.100" width="3.300" height="3.200" fill="#2d7346"/></svg>
<div class="a" style="left:0;top:737.3px;width:1304px;height:1px;background:#c2c2c2"></div>
<div class="a" style="left:1303px;top:345px;width:1px;height:393.30px;background:#a8a8a8"></div>
<div class="a" style="left:1306.200px;top:345px;width:11.300px;height:392.30px;background:#e8e8e8"></div>
<div class="a" style="left:1312.200px;top:345.400px;width:5.300px;height:11.200px;background:#fff;border:1px solid #ababab;border-right:none;box-sizing:border-box"></div>
<svg style="left:1314.500px;top:349px" width="3" height="4" viewBox="0 0 3 4"><path d="M3 0v4H0z" fill="#555"/></svg>
<div class="a" style="left:1312.200px;top:725.300px;width:5.300px;height:11.200px;background:#fff;border:1px solid #ababab;border-right:none;box-sizing:border-box"></div>
<svg style="left:1314.500px;top:729px" width="3" height="4" viewBox="0 0 3 4"><path d="M0 0h3v4z" fill="#555"/></svg>
<svg style="left:18px;top:744px" width="5" height="7" viewBox="0 0 5 7"><path d="M4.500 .5v6L.8 3.500z" fill="#c6c6c6"/></svg>
<svg style="left:40px;top:744px" width="5" height="7" viewBox="0 0 5 7"><path d="M.5 .5v6l3.700-3z" fill="#c6c6c6"/></svg>
<div class="a" style="left:76.400px;top:737.300px;width:54px;height:18.600px;background:#fff;border-bottom:1.600px solid #2d7346"></div>
<div class="a" id="sh1" style="left:76.400px;top:739.500px;width:54px;text-align:center;font-weight:bold;font-size:10.35px;line-height:14px;color:#2d7346">Sheet1</div>
<div class="a" id="sh2" style="left:130.400px;top:739.500px;width:53px;text-align:center;font-size:10.35px;line-height:14px;color:#444">Sheet2</div>
<div class="a" style="left:183px;top:740px;width:1px;height:15px;background:#c6c6c6"></div>
<svg style="left:209.500px;top:741px" width="13" height="13" viewBox="0 0 13 13"><circle cx="6.500" cy="6.500" r="5.600" fill="none" stroke="#555" stroke-width="1"/><path d="M6.500 3.500v6M3.500 6.500h6" stroke="#555" stroke-width="1.100"/></svg>
<svg style="left:638.500px;top:744px" width="2" height="8" viewBox="0 0 2 8"><rect x=".3" y=".2" width="1.200" height="1.200" fill="#999"/><rect x=".3" y="3.100" width="1.200" height="1.200" fill="#999"/><rect x=".3" y="6" width="1.200" height="1.200" fill="#999"/></svg>
<div class="a" style="left:651px;top:742.100px;width:651.800px;height:11.700px;background:#e8e8e8"></div>
<div class="box" style="left:651px;top:742.100px;width:11.800px;height:11.700px;border-color:#ababab"></div>
<svg style="left:655px;top:745.500px" width="4" height="5" viewBox="0 0 4 5"><path d="M3.600 0v5L.4 2.500z" fill="#555"/></svg>
<div class="box" style="left:662.800px;top:742.100px;width:362.800px;height:11.700px;border-color:#ababab"></div>
<div class="box" style="left:1291px;top:742.100px;width:11.800px;height:11.700px;border-color:#ababab"></div>
<svg style="left:1295.200px;top:745.500px" width="4" height="5" viewBox="0 0 4 5"><path d="M.4 0v5l3.200-2.500z" fill="#555"/></svg>
<div class="a" style="left:0;top:758.500px;width:1320px;height:17.500px;background:#387348"></div>
<div class="t " style="left:642.60px;top:761.60px;transform:translateX(-50%);color:#fff;font-weight:400;">准备</div>
<div class="t " style="left:1300.50px;top:761.00px;transform:translateX(-50%);color:#fff;font-size:9.300px;">100%</div>
<svg style="left:1316px;top:772px" width="4" height="4" viewBox="0 0 6 6"><path d="M6 0v6H0A6 6 0 0 0 6 0z" fill="#1e1e1e"/></svg>
<svg style="left:0;top:774px" width="2" height="2" viewBox="0 0 6 6"><path d="M0 0v6h6A6 6 0 0 1 0 0z" fill="#1e1e1e"/></svg>
</body>
</html>
